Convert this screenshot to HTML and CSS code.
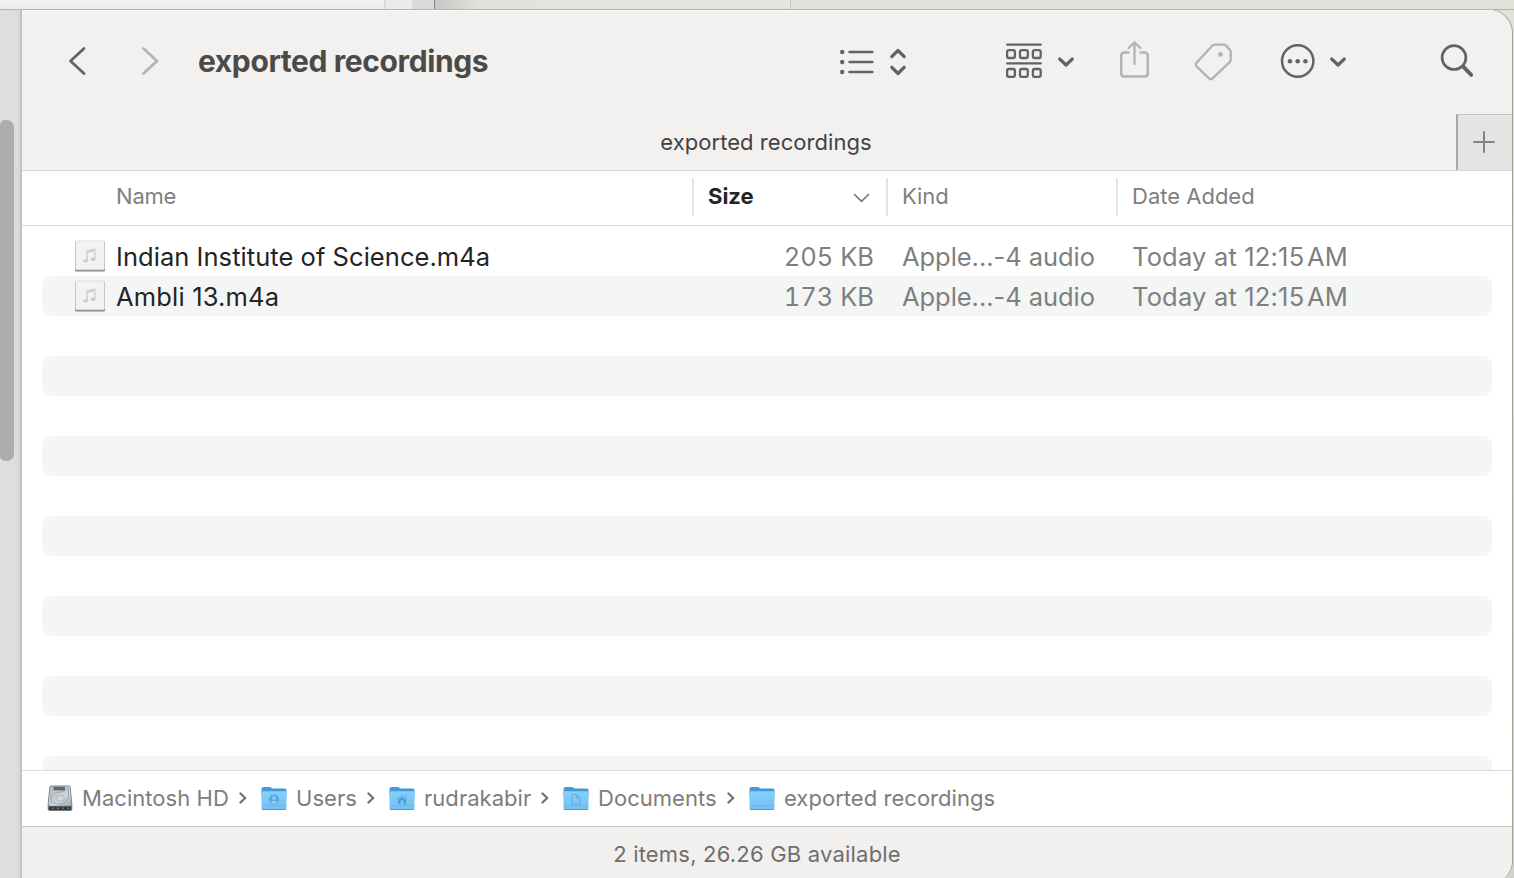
FILE: index.html
```
<!DOCTYPE html>
<html lang="en">
<head>
<meta charset="utf-8">
<title>exported recordings</title>
<link rel="stylesheet" href="styles.css">
</head>
<body>
<svg class="defs" width="0" height="0" aria-hidden="true">
  <defs>
    <linearGradient id="folderFront" x1="0" y1="0" x2="0" y2="1"><stop offset="0" stop-color="#85cffb"/><stop offset="1" stop-color="#74c1f4"/></linearGradient>
    <linearGradient id="diskTop" x1="0" y1="0" x2="1" y2="1"><stop offset="0" stop-color="#aeb7bd"/><stop offset=".6" stop-color="#cdd6dc"/><stop offset="1" stop-color="#a3acb2"/></linearGradient>
    <symbol id="folder" viewBox="0 0 28 26">
      <path d="M1.500 4.200Q1.500 2 3.500 2H9.500Q10.500 2 11.300 2.800Q12 3.500 13.200 3.500H25Q26.500 3.500 26.500 5.500V12H1.500Z" fill="#4399d5"/>
      <path d="M1.500 7.200Q1.500 6.200 2.500 6.200H25.500Q26.500 6.200 26.500 7.200V23.300Q26.500 24.800 25 24.800H3Q1.500 24.800 1.500 23.300Z" fill="url(#folderFront)"/>
      <path d="M2 20.700H26" stroke="#67b3e4" stroke-width=".8"/>
      <path d="M2 24.500H26" stroke="#5299cc" stroke-width="1"/>
    </symbol>
    <symbol id="note" viewBox="0 0 32 32">
      <rect x="1" y="1" width="30" height="30.500" rx="1.500" fill="#858585"/>
      <rect x="1.600" y="1" width="28.800" height="28.800" rx="1" fill="#f3f3f3" stroke="#d6d6d6" stroke-width=".7"/>
      <path d="M13.200 20.500V10.800L20.800 9.300V19" fill="none" stroke="#d0d0d0" stroke-width="1.500"/>
      <path d="M13.200 12L20.800 10.500" stroke="#d0d0d0" stroke-width="2"/>
      <ellipse cx="11.500" cy="21" rx="2.500" ry="1.800" fill="#cecece"/><ellipse cx="19.200" cy="19.400" rx="2.400" ry="1.800" fill="#cecece"/>
    </symbol>
    <symbol id="sep" viewBox="0 0 8 12"><path d="M1.500 1.500L6.200 6L1.500 10.500" fill="none" stroke="#747474" stroke-width="2.400" stroke-linecap="round" stroke-linejoin="round"/></symbol>
    <symbol id="down" viewBox="0 0 18 12"><path d="M2.700 3L9 9L15.300 3" fill="none" stroke="#646362" stroke-width="3.200" stroke-linecap="round" stroke-linejoin="round"/></symbol>
  </defs>
</svg>
<div class="behind-top"><i class="b1"></i><i class="b2"></i><i class="b3"></i><i class="b4"></i><i class="b5"></i></div>
<div class="stage">
  <div class="behind-left"><div class="thumb"></div></div>
  <main class="window">
    <header class="toolbar">
      <svg class="back" width="20" height="32" viewBox="0 0 20 32"><path d="M17 3.500L3.500 16L17 28.500" fill="none" stroke="#646362" stroke-width="2.800" stroke-linecap="round" stroke-linejoin="round"/></svg>
      <svg class="fwd" width="20" height="32" viewBox="0 0 20 32"><path d="M3.500 3.500L17 16L3.500 28.500" fill="none" stroke="#b5b4b2" stroke-width="2.800" stroke-linecap="round" stroke-linejoin="round"/></svg>
      <h1 class="title">exported recordings</h1>
      <svg class="view" width="72" height="32" viewBox="838 46 72 32" fill="none" stroke="#646362" stroke-linecap="round" stroke-linejoin="round"><path d="M849.500 52H872.300M849.500 62H872.300M849.500 72H872.300" stroke-width="2.500"/><g fill="#646362" stroke="none"><circle cx="842.200" cy="52" r="2.200"/><circle cx="842.200" cy="62" r="2.200"/><circle cx="842.200" cy="72" r="2.200"/></g><path d="M891.800 56.700L898 50.500L904.200 56.700M891.800 67.300L898 73.500L904.200 67.300" stroke-width="3.200"/></svg>
      <svg class="group" width="40" height="38" viewBox="1004 42 40 38" fill="none" stroke="#646362" stroke-width="2.300" stroke-linecap="round"><path d="M1007.200 44.600H1040.800M1007.200 63.400H1040.800"/><rect x="1007.100" y="50.200" width="7.800" height="7.800" rx="1.800"/><rect x="1020" y="50.200" width="7.800" height="7.800" rx="1.800"/><rect x="1032.900" y="50.200" width="7.800" height="7.800" rx="1.800"/><rect x="1007.100" y="69" width="7.800" height="7.800" rx="1.800"/><rect x="1020" y="69" width="7.800" height="7.800" rx="1.800"/><rect x="1032.900" y="69" width="7.800" height="7.800" rx="1.800"/></svg>
      <svg class="down1" width="18" height="12"><use href="#down"/></svg>
      <svg class="share" width="32" height="40" viewBox="1118 40 32 40" fill="none" stroke="#b5b4b2" stroke-width="2.500" stroke-linecap="round" stroke-linejoin="round"><path d="M1129.300 52.500H1124.500Q1121.200 52.500 1121.200 55.800V73.300Q1121.200 76.600 1124.500 76.600H1144.500Q1147.800 76.600 1147.800 73.300V55.800Q1147.800 52.500 1144.500 52.500H1139.700" stroke-linecap="butt"/><path d="M1134.500 64V42.800M1128.600 48L1134.500 42.300L1140.400 48" stroke-width="2.300"/></svg>
      <svg class="tag" width="40" height="40" viewBox="1194 42 40 40"><path d="M1214.800 44.600H1223.500Q1225 44.600 1226 45.600L1229.500 49.300Q1230.700 50.500 1230.700 52V59.500Q1230.700 61 1229.600 62.100L1212.600 78.300Q1210.800 80 1209 78.300L1196.600 66.400Q1194.800 64.600 1196.600 62.700L1212.300 45.700Q1213.300 44.600 1214.800 44.600Z" fill="none" stroke="#b5b4b2" stroke-width="2.400"/><circle cx="1220.500" cy="54.500" r="2.400" fill="#b5b4b2"/></svg>
      <svg class="more" width="36" height="36" viewBox="0 0 36 36"><circle cx="17.700" cy="18" r="15.700" fill="none" stroke="#646362" stroke-width="2.500"/><g fill="#646362"><circle cx="10" cy="18.300" r="2.300"/><circle cx="17.700" cy="18.300" r="2.300"/><circle cx="25.400" cy="18.300" r="2.300"/></g></svg>
      <svg class="down2" width="18" height="12"><use href="#down"/></svg>
      <svg class="search" width="36" height="36" viewBox="1440 42 36 36" fill="none" stroke="#646362"><circle cx="1454" cy="57.600" r="11.900" stroke-width="2.700"/><path d="M1463.200 66.700L1471.200 74.900" stroke-width="3.800" stroke-linecap="round"/></svg>
    </header>
    <div class="tabs"><div class="tab"><span>exported recordings</span></div><div class="plus"><svg width="22" height="22" viewBox="0 0 22 22"><path d="M11 1V21M1 11H21" stroke="#848483" stroke-width="2" stroke-linecap="round"/></svg></div></div>
    <div class="cols head">
      <div class="name"><span class="h-name">Name</span></div>
      <div class="size sorted"><span class="h-size">Size</span><svg width="18" height="12" viewBox="0 0 18 12"><path d="M2.500 2.500L9.500 9.300L16.500 2.500" fill="none" stroke="#777" stroke-width="1.700" stroke-linecap="round"/></svg></div>
      <div class="kind"><span class="h-kind">Kind</span></div>
      <div class="date"><span class="h-date">Date Added</span></div>
    </div>
    <section class="list">
      <div class="row cols"><div class="name"><svg class="file" width="32" height="32"><use href="#note"/></svg><span class="f1">Indian Institute of Science.m4a</span></div><div class="size"><span>205 KB</span></div><div class="kind"><span>Apple...-4 audio</span></div><div class="date"><span>Today at 12:15<span class="thin"> </span>AM</span></div></div>
      <div class="row cols"><div class="name"><svg class="file" width="32" height="32"><use href="#note"/></svg><span class="f2">Ambli 13.m4a</span></div><div class="size"><span>173 KB</span></div><div class="kind"><span>Apple...-4 audio</span></div><div class="date"><span>Today at 12:15<span class="thin"> </span>AM</span></div></div>
      <div class="row"></div><div class="row"></div><div class="row"></div><div class="row"></div><div class="row"></div><div class="row"></div><div class="row"></div><div class="row"></div><div class="row"></div><div class="row"></div><div class="row"></div><div class="row"></div>
    </section>
    <nav class="path">
      <div class="crumb c1"><svg width="28" height="28" viewBox="0 0 28 28"><path d="M3.500 2.500Q4 1.500 5.500 1.500H22.500Q24 1.500 24.500 2.500L26.300 20V25Q26.300 27 24.500 27H3.500Q1.700 27 1.700 25V20Z" fill="#747a7e"/><path d="M4.200 3Q4.500 2.200 5.500 2.200H22.500Q23.500 2.200 23.800 3L25.500 20.500Q25.500 21.800 24 21.800H4Q2.500 21.800 2.500 20.500Z" fill="url(#diskTop)"/><rect x="7.500" y="2.800" width="11.500" height="3.600" fill="#62696d"/><path d="M6 19.500Q3 11 9 9.200L18 7.200Q21.500 6 21.500 3M22.500 4V12Q22 18.500 15 20Q9 20.500 7 18" fill="none" stroke="#97a2a9" stroke-width=".8"/><ellipse cx="14.300" cy="14.300" rx="4" ry="3" fill="#ced6db" stroke="#a0aab0" stroke-width=".7"/><rect x="3" y="22.500" width="22" height="3.500" rx="1" fill="#333a3d"/><path d="M6 24.300H8M11 24.300H13M16 24.300H18M21 24.300H23" stroke="#6c7579" stroke-width="1.500"/></svg><span>Macintosh HD</span><svg class="sep" width="8" height="12"><use href="#sep"/></svg></div>
      <div class="crumb c2"><svg width="28" height="26" viewBox="0 0 28 26"><use href="#folder"/><circle cx="14" cy="14.600" r="5" fill="#56a7de"/><circle cx="14" cy="13" r="1.900" fill="#8bd0f8"/><path d="M10.700 17.500Q11.500 15.500 14 15.500T17.300 17.500Q14 20.200 10.700 17.500Z" fill="#8bd0f8"/></svg><span>Users</span><svg class="sep" width="8" height="12"><use href="#sep"/></svg></div>
      <div class="crumb c3"><svg width="28" height="26" viewBox="0 0 28 26"><use href="#folder"/><path d="M8.500 14.200L14 9.500L19.500 14.200M18 12V9.500" fill="none" stroke="#5fade0" stroke-width="1"/><path d="M10 14.800L14 11.500L18 14.800V19.200H15.500V15.500H12.500V19.200H10Z" fill="#4b9fd9"/></svg><span>rudrakabir</span><svg class="sep" width="8" height="12"><use href="#sep"/></svg></div>
      <div class="crumb c4"><svg width="28" height="26" viewBox="0 0 28 26"><use href="#folder"/><path d="M10 9.500H14.500L18 13V20H10ZM14.500 9.500V13H18" fill="none" stroke="#5dacdf" stroke-width="1"/></svg><span>Documents</span><svg class="sep" width="8" height="12"><use href="#sep"/></svg></div>
      <div class="crumb c5"><svg width="28" height="26" viewBox="0 0 28 26"><use href="#folder"/></svg><span>exported recordings</span></div>
    </nav>
    <footer class="status"><span>2 items, 26.26 GB available</span></footer>
  </main>
</div>
</body>
</html>
```

FILE: styles.css
```
* { box-sizing: border-box; }
body { margin: 0; width: 1514px; height: 878px; overflow: hidden; background: #d5d4ce; font-family: Inter, sans-serif; white-space: nowrap; }
.defs { display: block; height: 0; }
svg { display: block; flex: none; }
span { display: block; }
.behind-top { display: flex; height: 9px; }
.b1 { width: 386px; background: linear-gradient(#f3f3f3, #eaeaea); border-right: 2px solid #dadada; }
.b2 { width: 26px; background: #ebebeb; }
.b3 { width: 23px; background: #dadada; border-right: 1px solid #858585; }
.b4 { width: 356px; background: linear-gradient(90deg, #c8c7c3, #e3e2dd 45px, #e5e5df); border-right: 1px solid #c8c8c4; }
.b5 { flex: 1; background: #e3e2da; }
.stage { display: flex; height: 875px; border-top: 1px solid #b3b3b1; background: linear-gradient(#e3e2da, #d2d2cc); }
.behind-left { width: 22px; padding-top: 110px; background: linear-gradient(90deg, #dfdfdd 0 13px, #d9d9d7 19px, #b9b9b7 22px); }
.thumb { width: 14px; height: 341px; background: #adadad; border-radius: 5px 7px 7px 5px; }
.window { width: 1491px; height: 874px; background: #fff; border-right: 1px solid #a2a29d; border-radius: 0 24px 24px 0; overflow: hidden; box-shadow: 0 -1px 0 #b3b3b1; }
.toolbar { display: flex; align-items: center; height: 104px; padding: 0 0 3px 45px; background: #f3f1ef; border-top: 1px solid #fafafa; }
.fwd { margin-left: 53px; }
.title { width: 292px; margin: 0 0 0 38px; font-size: 30px; font-weight: 650; line-height: 40px; letter-spacing: -.4px; color: #4b4a49; }
.view { margin: 2px 0 0 348px; }
.group { margin-left: 94px; }
.down1 { margin: 2px 0 0 13px; }
.share { margin: 0 0 2px 43px; }
.tag { margin: 2px 0 0 44px; }
.more { margin-left: 46px; }
.down2 { margin: 2px 0 0 13px; }
.search { margin: 0 0 2px 93px; }
.tabs { display: flex; height: 57px; background: #f3f1ef; border-bottom: 1px solid #d7d7d7; }
.tab { display: flex; flex: 1; align-items: center; justify-content: center; padding-left: 54px; font-size: 22px; letter-spacing: .05px; color: #434241; }
.plus { display: flex; width: 56px; align-items: center; padding: 0 0 1px 14.5px; background: #e5e4e2; border-left: 2px solid #aaa9a7; border-top: 1px solid #c3c2c0; }
.cols { display: grid; grid-template-columns: 670px 194px 230px 1fr; }
.head { height: 55px; padding-top: 7px; font-size: 22px; line-height: 36px; color: #808080; border-bottom: 1px solid #dcdcdc; }
.head > div { height: 38px; }
.head .name { padding-left: 94px; letter-spacing: -.2px; }
.head .size { display: flex; justify-content: space-between; padding: 0 16px 0 14px; font-weight: 700; color: #242424; border-left: 2px solid #e3e3e3; }
.head .size svg { margin-top: 14px; }
.head .kind, .head .date { padding-left: 14px; border-left: 2px solid #e3e3e3; }
.head .kind { letter-spacing: -.1px; }
.list { height: 544px; padding: 10px 20px 0; overflow: hidden; }
.row { height: 40px; border-radius: 9px; font-size: 25.5px; line-height: 42px; color: #7f7f7f; }
.row:nth-child(even) { background: #f4f6f5; }
.row.cols { grid-template-columns: 650px 194px 230px 1fr; }
.row .name { display: flex; height: 40px; padding-left: 32px; color: #242424; }
.file { margin: 4px 10px 0 0; }
.f1 { letter-spacing: .05px; }
.f2 { letter-spacing: .18px; }
.row .size { display: flex; justify-content: flex-end; padding-right: 12px; font-variant-numeric: tabular-nums; }
.row .kind, .row .date { padding-left: 16px; }
.row .kind { letter-spacing: -.05px; }
.row .date { letter-spacing: .18px; }
.thin { display: inline; font-size: 9px; }
.path { display: flex; height: 57px; align-items: center; padding: 0 0 1px 24px; font-size: 22px; letter-spacing: .04px; color: #7d7d7d; border-top: 1px solid #dcdcdc; border-bottom: 1px solid #c8c8c7; }
.crumb { display: flex; align-items: center; }
.crumb span { margin-left: 8px; }
.c1 { width: 214px; }
.c2 { width: 128px; }
.c3 { width: 174px; }
.c4 { width: 186px; }
.sep { margin-left: auto; margin-right: 13px; }
.status { display: flex; height: 60px; justify-content: center; padding-right: 20px; background: #f2f0ef; font-size: 22px; line-height: 55px; letter-spacing: .2px; color: #6f6e6d; }
```
